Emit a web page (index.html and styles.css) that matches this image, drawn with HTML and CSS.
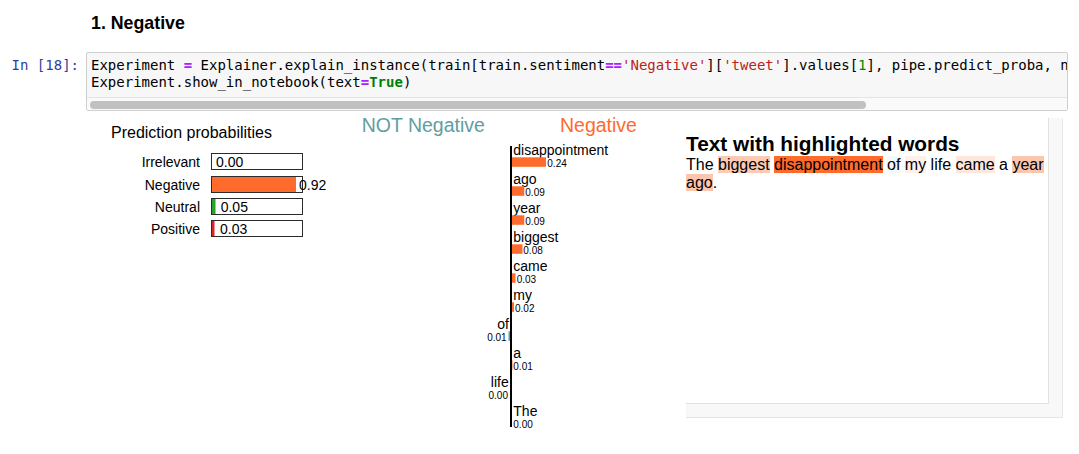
FILE: index.html
```html
<!DOCTYPE html>
<html>
<head>
<meta charset="utf-8">
<link rel="stylesheet" href="styles.css">
</head>
<body>
<h3 class="heading">1. Negative</h3>

<div class="in-row">
  <div class="prompt">In&nbsp;[18]:</div>
  <div class="input">
    <div class="code">Experiment <span class="op">=</span> Explainer.explain_instance(train[train.sentiment<span class="op">==</span><span class="str">'Negative'</span>][<span class="str">'tweet'</span>].values[<span class="num">1</span>], pipe.predict_proba, n
Experiment.show_in_notebook(text<span class="op">=</span><span class="kw">True</span>)</div>
    <div class="hscroll"><div class="thumb"></div></div>
  </div>
</div>

<div class="output">
  <svg class="proba" width="254" height="130" viewBox="0 0 254 130">
    <text class="title" x="25" y="24.3">Prediction probabilities</text>

    <text class="plabel" x="114" y="53.3">Irrelevant</text>
    <rect class="pbox" x="125.5" y="39.5" width="91" height="16"></rect>
    <text class="pval" x="130" y="53.3">0.00</text>

    <text class="plabel" x="114" y="76.3">Negative</text>
    <rect class="fill-neg" x="126" y="63" width="84" height="15"></rect>
    <rect class="pbox" x="125.5" y="62.5" width="91" height="16"></rect>
    <text class="pval" x="213" y="76.3">0.92</text>

    <text class="plabel" x="114" y="98.3">Neutral</text>
    <rect class="fill-neu" x="126" y="85" width="3.5" height="15"></rect>
    <rect class="pbox" x="125.5" y="84.5" width="91" height="16"></rect>
    <text class="pval" x="134.7" y="98.3">0.05</text>

    <text class="plabel" x="114" y="120.3">Positive</text>
    <rect class="fill-pos" x="126" y="107" width="2.5" height="15"></rect>
    <rect class="pbox" x="125.5" y="106.5" width="91" height="16"></rect>
    <text class="pval" x="134" y="120.3">0.03</text>
  </svg>

  <svg class="feat" width="346" height="320" viewBox="0 0 346 320">
    <text class="cls cls-not" x="21.7" y="18.3">NOT Negative</text>
    <text class="cls cls-neg" x="220" y="18.3">Negative</text>

    <text class="flabel" x="173.3" y="40.5">disappointment</text>
    <rect class="fbar-pos" x="172" y="43.3" width="34" height="9.5"></rect>
    <text class="fval" x="207.3" y="53">0.24</text>

    <text class="flabel" x="173.3" y="69.5">ago</text>
    <rect class="fbar-pos" x="172" y="72.3" width="12.3" height="9.5"></rect>
    <text class="fval" x="185.3" y="82">0.09</text>

    <text class="flabel" x="173.3" y="98.5">year</text>
    <rect class="fbar-pos" x="172" y="101.3" width="12.3" height="9.5"></rect>
    <text class="fval" x="185.3" y="111">0.09</text>

    <text class="flabel" x="173.3" y="127.5">biggest</text>
    <rect class="fbar-pos" x="172" y="130.3" width="10.5" height="9.5"></rect>
    <text class="fval" x="183.3" y="140">0.08</text>

    <text class="flabel" x="173.3" y="156.5">came</text>
    <rect class="fbar-pos" x="172" y="159.3" width="3.5" height="9.5"></rect>
    <text class="fval" x="176.7" y="169">0.03</text>

    <text class="flabel" x="173.3" y="185.5">my</text>
    <rect class="fbar-pos" x="172" y="188.3" width="2" height="9.5"></rect>
    <text class="fval" x="175" y="198">0.02</text>

    <text class="flabel end" x="169" y="214.5">of</text>
    <rect class="fbar-not" x="168.5" y="217.3" width="1.5" height="9.5"></rect>
    <text class="fval end" x="166.7" y="227">0.01</text>

    <text class="flabel" x="173.3" y="243.5">a</text>
    <rect class="fbar-pos" x="172" y="246.3" width="0.5" height="9.5"></rect>
    <text class="fval" x="173.3" y="256">0.01</text>

    <text class="flabel end" x="168.7" y="272.5">life</text>
    <text class="fval end" x="168" y="285">0.00</text>

    <text class="flabel" x="173.3" y="301.5">The</text>
    <text class="fval" x="173.3" y="314">0.00</text>

    <line class="axis" x1="171" y1="32" x2="171" y2="313"></line>
  </svg>

  <div class="panel">
    <div class="panel-body">
      <h3 class="hl-title">Text with highlighted words</h3>
      <div class="hl-text">The <span class="w-biggest">biggest</span> <span class="w-disap">disappointment</span> <span class="w-of">of</span> <span class="w-my">my</span> life <span class="w-came">came</span> a <span class="w-year">year</span> <span class="w-ago">ago</span>.</div>
    </div>
  </div>
</div>
</body>
</html>
```

FILE: styles.css
```css
html, body {
  margin: 0;
  padding: 0;
  background: #ffffff;
}

body {
  font-family: "Liberation Sans", Arial, sans-serif;
  color: #000;
  width: 1079px;
}

.heading {
  margin: 0;
  padding: 13px 0 0 91px;
  font-size: 17.8px;
  line-height: 20px;
  font-weight: 700;
}

.in-row {
  display: flex;
  margin-top: 19px;
}

.prompt {
  width: 86px;
  box-sizing: border-box;
  padding: 5px 7px 0 0;
  text-align: right;
  font-family: "DejaVu Sans Mono", monospace;
  font-size: 14px;
  line-height: 17px;
  color: #303F9F;
  white-space: nowrap;
}

.input {
  width: 982px;
  box-sizing: border-box;
  border: 1px solid #cfcfcf;
  border-radius: 2px;
  background: #f7f7f7;
  overflow: hidden;
}

.code {
  padding: 4px 0 6px 4px;
  white-space: pre;
  overflow: hidden;
  font-family: "DejaVu Sans Mono", monospace;
  font-size: 14px;
  line-height: 17px;
  color: #000;
}

.op {
  color: #AA22FF;
  font-weight: bold;
}

.str {
  color: #BA2121;
}

.num {
  color: #008800;
}

.kw {
  color: #008000;
  font-weight: bold;
}

.hscroll {
  border-top: 1px solid #e4e4e4;
  height: 13px;
  box-sizing: border-box;
  padding-top: 3px;
  background: #fafafa;
}

.thumb {
  margin-left: 3px;
  width: 776px;
  height: 8px;
  border-radius: 4px;
  background: #c1c1c1;
}

.output {
  display: flex;
  align-items: flex-start;
  padding-left: 86px;
  margin-top: 3px;
}

.proba, .feat {
  display: block;
  flex: none;
}

.proba text, .feat text {
  font-family: "Liberation Sans", Arial, sans-serif;
}

.title {
  font-size: 16px;
  fill: #000;
}

.plabel {
  font-size: 14px;
  text-anchor: end;
  fill: #000;
}

.pval {
  font-size: 14px;
  fill: #000;
}

.pbox {
  fill: none;
  stroke: #2b2b2b;
  stroke-width: 1;
}

.fill-neg {
  fill: #ff6b2d;
}

.fill-neu {
  fill: #2ca02c;
}

.fill-pos {
  fill: #d62728;
}

.cls {
  font-size: 19.5px;
}

.cls-not {
  fill: #5F9EA0;
}

.cls-neg {
  fill: #ff6b2d;
}

.flabel {
  font-size: 14px;
  fill: #000;
}

.fval {
  font-size: 10px;
  fill: #000;
}

.end {
  text-anchor: end;
}

.fbar-pos {
  fill: #ff6b2d;
}

.fbar-not {
  fill: #5F9EA0;
}

.axis {
  stroke: #000;
  stroke-width: 2;
}

.panel {
  flex: none;
  margin-top: 4px;
  width: 377px;
  height: 300px;
  box-sizing: border-box;
  background: #f8f8f8;
  border-right: 1px solid #e8e8e8;
  border-bottom: 1px solid #e4e4e4;
}

.panel-body {
  width: 363px;
  height: 286px;
  box-sizing: border-box;
  background: #ffffff;
  border-right: 1px solid #e2e2e2;
  border-bottom: 1px solid #e2e2e2;
  overflow: hidden;
}

.hl-title {
  margin: 14px 0 0 0;
  font-size: 20.8px;
  line-height: normal;
  font-weight: 700;
}

.hl-text {
  font-size: 16px;
  line-height: normal;
}

.w-disap {
  background: #ff6b2d;
}

.w-biggest {
  background: #fdcab4;
}

.w-year,
.w-ago {
  background: #fcc5ae;
}

.w-came {
  background: #fde6dc;
}

.w-my {
  background: #fff0ea;
}

.w-of {
  background: #f3f8f8;
}
```
